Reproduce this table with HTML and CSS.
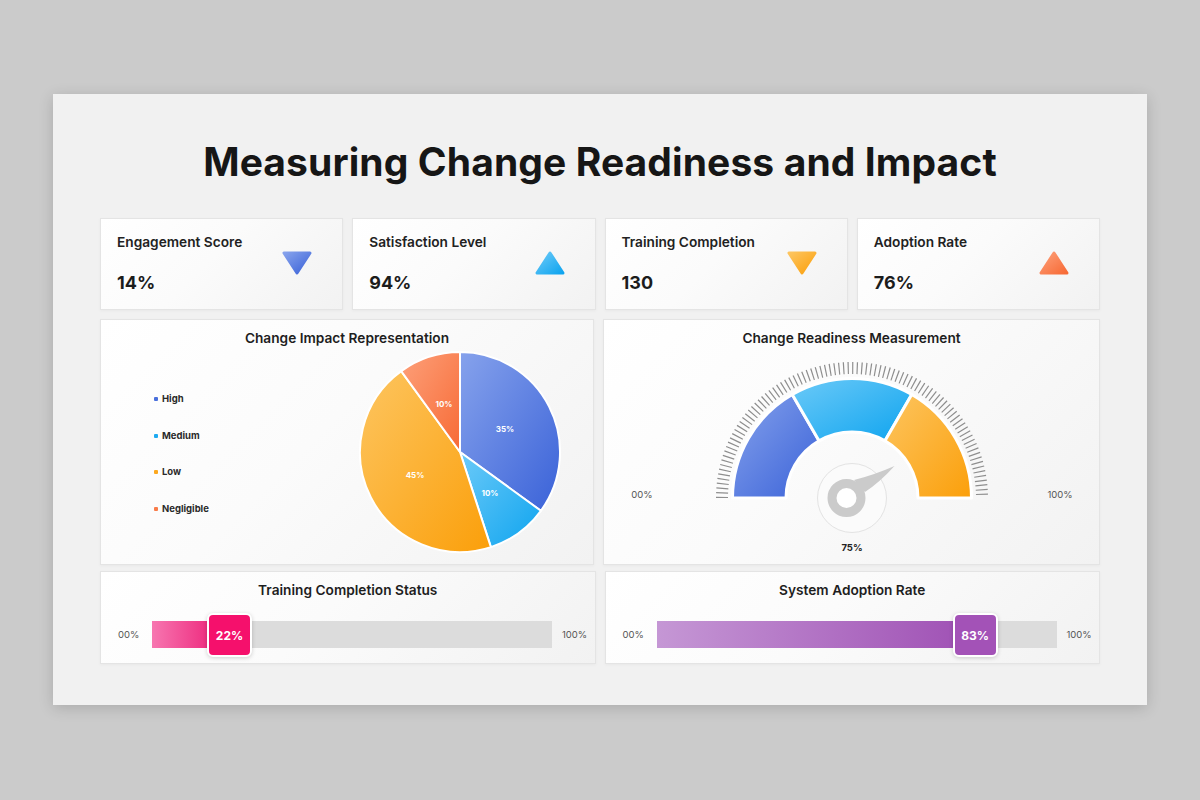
FILE: index.html
```html
<!DOCTYPE html>
<html lang="en">
<head>
<meta charset="utf-8">
<title>Measuring Change Readiness and Impact</title>
<link rel="stylesheet" href="styles.css">
</head>
<body>
<svg class="defs" width="0" height="0" aria-hidden="true">
  <defs>
    <linearGradient id="gBlue" x1="0" y1="0" x2="1" y2="1">
      <stop offset="0" stop-color="#86a2ec"/>
      <stop offset="1" stop-color="#3a62d8"/>
    </linearGradient>
    <linearGradient id="gSky" x1="0" y1="0" x2="1" y2="1">
      <stop offset="0" stop-color="#6ccaf8"/>
      <stop offset="1" stop-color="#0ea4ef"/>
    </linearGradient>
    <linearGradient id="gOrange" x1="0" y1="0" x2="1" y2="1">
      <stop offset="0" stop-color="#fdc560"/>
      <stop offset="1" stop-color="#fb9f0a"/>
    </linearGradient>
    <linearGradient id="gRed" x1="0" y1="0" x2="1" y2="1">
      <stop offset="0" stop-color="#fda07a"/>
      <stop offset="1" stop-color="#f76a35"/>
    </linearGradient>
  </defs>
</svg>

<main class="slide">
  <h1 class="title">Measuring Change Readiness and Impact</h1>

  <section class="kpis">
    <div class="card kpi">
      <div class="kpi-text">
        <div class="kpi-label">Engagement Score</div>
        <div class="kpi-value">14%</div>
      </div>
      <svg class="tri" viewBox="0 0 32 26"><path d="M3 3 H29 L16 23 Z" fill="url(#gBlue)" stroke="url(#gBlue)" stroke-width="3" stroke-linejoin="round"/></svg>
    </div>
    <div class="card kpi">
      <div class="kpi-text">
        <div class="kpi-label">Satisfaction Level</div>
        <div class="kpi-value">94%</div>
      </div>
      <svg class="tri" viewBox="0 0 32 26"><path d="M3 23 H29 L16 3 Z" fill="url(#gSky)" stroke="url(#gSky)" stroke-width="3" stroke-linejoin="round"/></svg>
    </div>
    <div class="card kpi">
      <div class="kpi-text">
        <div class="kpi-label">Training Completion</div>
        <div class="kpi-value">130</div>
      </div>
      <svg class="tri" viewBox="0 0 32 26"><path d="M3 3 H29 L16 23 Z" fill="url(#gOrange)" stroke="url(#gOrange)" stroke-width="3" stroke-linejoin="round"/></svg>
    </div>
    <div class="card kpi">
      <div class="kpi-text">
        <div class="kpi-label">Adoption Rate</div>
        <div class="kpi-value">76%</div>
      </div>
      <svg class="tri" viewBox="0 0 32 26"><path d="M3 23 H29 L16 3 Z" fill="url(#gRed)" stroke="url(#gRed)" stroke-width="3" stroke-linejoin="round"/></svg>
    </div>
  </section>

  <section class="charts">
    <div class="card panel">
      <h2 class="panel-title">Change Impact Representation</h2>
      <div class="pie-body">
        <ul class="legend">
          <li><span class="dot dot-blue"></span>High</li>
          <li><span class="dot dot-sky"></span>Medium</li>
          <li><span class="dot dot-orange"></span>Low</li>
          <li><span class="dot dot-red"></span>Negligible</li>
        </ul>
        <svg class="pie" width="210" height="210" viewBox="0 0 210 210">
          <g stroke="#ffffff" stroke-width="2" stroke-linejoin="round">
            <path d="M105 105 L105 5 A100 100 0 0 1 185.9 163.8 Z" fill="url(#gBlue)"/>
            <path d="M105 105 L185.9 163.8 A100 100 0 0 1 135.9 200.1 Z" fill="url(#gSky)"/>
            <path d="M105 105 L135.9 200.1 A100 100 0 0 1 46.2 24.1 Z" fill="url(#gOrange)"/>
            <path d="M105 105 L46.2 24.1 A100 100 0 0 1 105 5 Z" fill="url(#gRed)"/>
          </g>
          <g class="pie-lbl" text-anchor="middle">
            <text x="150" y="85">35%</text>
            <text x="135" y="149">10%</text>
            <text x="60" y="131">45%</text>
            <text x="89" y="60">10%</text>
          </g>
        </svg>
      </div>
    </div>

    <div class="card panel">
      <h2 class="panel-title">Change Readiness Measurement</h2>
      <svg class="gauge" width="495" height="218" viewBox="0 0 495 218">
        <path d="M118 152 A130 130 0 0 1 378 152" fill="none" stroke="#8e8e8e" stroke-width="12" stroke-dasharray="1.2 3.338"/>
        <g stroke="#ffffff" stroke-width="3" stroke-linejoin="round">
          <path d="M128.5 152 A119.5 119.5 0 0 1 188.25 48.51 L215 94.84 A66 66 0 0 0 182 152 Z" fill="url(#gBlue)"/>
          <path d="M188.25 48.51 A119.5 119.5 0 0 1 307.75 48.51 L281 94.84 A66 66 0 0 0 215 94.84 Z" fill="url(#gSky)"/>
          <path d="M307.75 48.51 A119.5 119.5 0 0 1 367.5 152 L314 152 A66 66 0 0 0 281 94.84 Z" fill="url(#gOrange)"/>
        </g>
        <circle cx="248" cy="152" r="34.5" fill="#fbfbfb" stroke="#e3e3e3" stroke-width="1"/>
        <path d="M261 146 Q276 136 290.5 120 Q270 129 250 134 Z" fill="#cbcbcb"/>
        <circle cx="242.5" cy="152" r="14.5" fill="#ffffff" stroke="#cbcbcb" stroke-width="9"/>
        <text class="g-lbl" x="38" y="152" text-anchor="middle">00%</text>
        <text class="g-lbl" x="456" y="152" text-anchor="middle">100%</text>
        <text class="g-val" x="248" y="205" text-anchor="middle">75%</text>
      </svg>
    </div>
  </section>

  <section class="charts bars">
    <div class="card panel bar-panel">
      <h2 class="panel-title">Training Completion Status</h2>
      <div class="bar-row">
        <span class="bar-end">00%</span>
        <div class="track">
          <div class="fill fill-pink" style="width:14.5%">
            <span class="badge badge-pink">22%</span>
          </div>
        </div>
        <span class="bar-end">100%</span>
      </div>
    </div>
    <div class="card panel bar-panel">
      <h2 class="panel-title">System Adoption Rate</h2>
      <div class="bar-row">
        <span class="bar-end">00%</span>
        <div class="track">
          <div class="fill fill-purple" style="width:74.8%">
            <span class="badge badge-purple">83%</span>
          </div>
        </div>
        <span class="bar-end">100%</span>
      </div>
    </div>
  </section>
</main>
</body>
</html>
```

FILE: styles.css
```css
* { box-sizing: border-box; }

html, body {
  margin: 0;
  padding: 0;
}

body {
  background: #cbcbcb;
  font-family: "Inter", "Open Sans", "Liberation Sans", sans-serif;
  color: #1d1d1d;
  width: 1200px;
  height: 800px;
  overflow: hidden;
}

.defs {
  position: absolute;
  width: 0;
  height: 0;
}

.slide {
  width: 1094px;
  height: 611px;
  margin: 94px 0 0 53px;
  padding: 0 47px;
  background: #f1f1f1;
  box-shadow: 0 3px 14px rgba(0, 0, 0, 0.16);
  display: flex;
  flex-direction: column;
}

.title {
  margin: 46px 0 34px;
  height: 44px;
  line-height: 44px;
  font-size: 39px;
  font-weight: 700;
  text-align: center;
  color: #161616;
  letter-spacing: 0.1px;
}

.card {
  background: linear-gradient(135deg, #ffffff 0%, #fbfbfb 45%, #f2f2f2 100%);
  border: 1px solid #e4e4e4;
  box-shadow: 0 1px 3px rgba(0, 0, 0, 0.04);
}

.kpis {
  display: grid;
  grid-template-columns: repeat(4, 1fr);
  gap: 9px;
  height: 92px;
}

.kpi {
  display: flex;
  align-items: center;
  justify-content: space-between;
  padding: 0 29px 0 16px;
}

.kpi-text {
  align-self: flex-start;
  padding-top: 14px;
}

.kpi-label {
  font-size: 13.7px;
  font-weight: 600;
  line-height: 18px;
  color: #222;
}

.kpi-value {
  margin-top: 20px;
  font-size: 18px;
  font-weight: 700;
  line-height: 24px;
  color: #1c1c1c;
}

.tri {
  width: 32px;
  height: 26px;
  margin-top: -2px;
}

.charts {
  display: grid;
  grid-template-columns: 1fr 1fr;
  gap: 9px;
  margin-top: 9px;
  height: 244px;
}

.charts.bars {
  margin-top: 8px;
  height: 93px;
}

.panel {
  display: flex;
  flex-direction: column;
  padding-top: 10px;
}

.panel-title {
  margin: 0;
  font-size: 13.7px;
  font-weight: 600;
  line-height: 16px;
  text-align: center;
  color: #1e1e1e;
}

.pie-body {
  display: flex;
  align-items: flex-start;
}

.legend {
  list-style: none;
  margin: 0;
  padding: 46px 0 0 53px;
  width: 254px;
  display: flex;
  flex-direction: column;
  gap: 22.7px;
}

.legend li {
  font-size: 9.5px;
  font-weight: 700;
  line-height: 14px;
  color: #2a2a2a;
  display: flex;
  align-items: center;
  gap: 4px;
}

.dot {
  width: 4px;
  height: 4px;
  border-radius: 1px;
  display: inline-block;
}
.dot-blue { background: #4a70dc; }
.dot-sky { background: #1eaaf1; }
.dot-orange { background: #fca81f; }
.dot-red { background: #f97c4a; }

.pie {
  margin-top: 1px;
}

.pie-lbl text {
  font-size: 8px;
  font-weight: 700;
  fill: #ffffff;
}

.gauge {
  display: block;
}

.g-lbl {
  font-size: 9.5px;
  fill: #555;
}

.g-val {
  font-size: 9.5px;
  font-weight: 700;
  fill: #222;
}

.bar-row {
  display: flex;
  align-items: center;
  margin-top: 23px;
  padding-left: 17px;
}

.bar-end {
  font-size: 9.5px;
  color: #555;
  width: 34px;
}

.bar-end:last-child {
  width: auto;
  padding-left: 10px;
}

.track {
  position: relative;
  width: 400px;
  height: 27px;
  background: #dcdcdc;
}

.fill {
  position: relative;
  height: 100%;
}

.fill-pink {
  background: linear-gradient(90deg, #f776b0 0%, #ee2d80 100%);
}

.fill-purple {
  background: linear-gradient(90deg, #c597d5 0%, #a154b6 100%);
}

.badge {
  position: absolute;
  left: calc(100% - 3px);
  top: -8px;
  width: 45px;
  height: 44px;
  border-radius: 6px;
  border: 2px solid #ffffff;
  box-shadow: 0 1px 4px rgba(0, 0, 0, 0.18);
  color: #fff;
  font-size: 12px;
  font-weight: 700;
  display: flex;
  align-items: center;
  justify-content: center;
}

.badge-pink { background: #f5106c; }
.badge-purple { background: #a352b7; }
```
